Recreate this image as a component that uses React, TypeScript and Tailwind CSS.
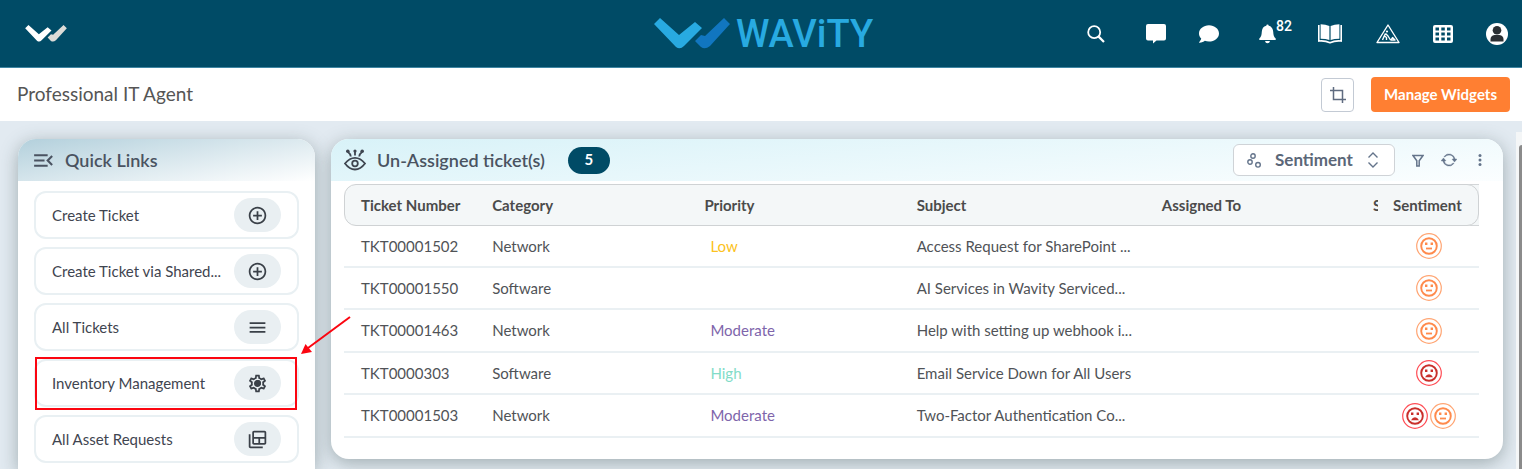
import { BsArrowRepeat } from 'react-icons/bs';
import { FaComment } from 'react-icons/fa';
import { MdAddCircleOutline, MdMenu, MdMenuOpen, MdOutlineBackupTable, MdOutlineSettings } from 'react-icons/md';

type Mood = 'neutral' | 'sad';

const quickLinks = [
  { label: 'Create Ticket', icon: <MdAddCircleOutline size={21} /> },
  { label: 'Create Ticket via Shared...', icon: <MdAddCircleOutline size={21} /> },
  { label: 'All Tickets', icon: <MdMenu size={21} /> },
  { label: 'Inventory Management', icon: <GearIcon />, highlighted: true },
  { label: 'All Asset Requests', icon: <MdOutlineBackupTable size={21} className="-scale-x-100" /> },
];

const tickets: { id: string; category: string; priority: string; subject: string; moods: Mood[] }[] = [
  { id: 'TKT00001502', category: 'Network', priority: 'Low', subject: 'Access Request for SharePoint ...', moods: ['neutral'] },
  { id: 'TKT00001550', category: 'Software', priority: '', subject: 'AI Services in Wavity Serviced...', moods: ['neutral'] },
  { id: 'TKT00001463', category: 'Network', priority: 'Moderate', subject: 'Help with setting up webhook i...', moods: ['neutral'] },
  { id: 'TKT0000303', category: 'Software', priority: 'High', subject: 'Email Service Down for All Users', moods: ['sad'] },
  { id: 'TKT00001503', category: 'Network', priority: 'Moderate', subject: 'Two-Factor Authentication Co...', moods: ['sad', 'neutral'] },
];

const priorityColors: Record<string, string> = {
  Low: 'text-[#fcc220]',
  Moderate: 'text-[#7e65ab]',
  High: 'text-[#82dcc8]',
};

function GearIcon() {
  return (
    <span className="relative">
      <MdOutlineSettings size={21} />
      <span className="absolute inset-0 m-auto size-[6px] rounded-full bg-current" />
    </span>
  );
}

function CheckMark({ className, left, right }: { className: string; left: string; right: string }) {
  return (
    <svg viewBox="0 0 76 31" className={className} aria-hidden="true">
      <path d="M0 6 6 0 25 17 41 4 48 10 30 28Q26 32 22 29Z" fill={left} />
      <path d="M41 23 47 17 51 18 70 0 76 6 56 28Q51 32 47 29Z" fill={right} />
    </svg>
  );
}

function SearchIcon() {
  return (
    <svg width="18" height="18" viewBox="0 0 18 18" fill="none" stroke="white" strokeWidth="1.8">
      <circle cx="7.2" cy="7.2" r="6" />
      <path d="m11.4 11.4 5.6 5.6" strokeWidth="2.2" />
    </svg>
  );
}

function MessageIcon() {
  return (
    <svg width="20" height="20" viewBox="0 0 20 20" fill="white">
      <path d="M2 0h16q2 0 2 2v12.5q0 2-2 2h-7.500L7 19.500v-3H2q-2 0-2-2V2Q0 0 2 0Z" />
    </svg>
  );
}

function BellIcon() {
  return (
    <svg width="17" height="20" viewBox="0 0 17 20" fill="white">
      <path d="M7.3 1.8a1.200 1.200 0 0 1 2.400 0c3 .6 4.300 3 4.500 6 .2 3.500.6 5.200 2.500 6.800V16H.3v-1.400c1.900-1.600 2.300-3.300 2.500-6.800.2-3 1.500-5.400 4.500-6ZM6 17h5q-.5 2.300-2.500 2.300T6 17Z" />
    </svg>
  );
}

function BookIcon() {
  return (
    <svg width="24" height="20" viewBox="0 0 24 20" fill="none" stroke="white">
      <path d="M.8 1v16q6.200-.6 11.200 1.700 5-2.300 11.200-1.700V1" strokeWidth="1.600" />
      <path d="M2.600.2q5 0 8.800 1.700v14.200q-3.500-1.400-8.800-1.400ZM21.400.2q-5 0-8.800 1.700v14.200q3.500-1.400 8.800-1.400Z" fill="white" stroke="none" />
    </svg>
  );
}

function ConstructionIcon() {
  return (
    <svg width="24" height="20" viewBox="0 0 24 20" fill="none" stroke="white" strokeLinejoin="round">
      <path d="M12 1 23 18.500H1Z" strokeWidth="1.400" />
      <circle cx="11" cy="7.500" r="1.100" fill="white" stroke="none" />
      <path d="m9.500 9.500-1.500 3L6.500 16M9.500 9.500l2.500 2.500 2.500 4M8.500 12l2 1.500V16M15 16l1.500-2.500 2.500 2.500Z" strokeWidth="1.400" />
    </svg>
  );
}

function GridIcon() {
  return (
    <svg width="20" height="18" viewBox="0 0 20 18" fill="white">
      <path fillRule="evenodd" d="M2 0h16q2 0 2 2v14q0 2-2 2H2q-2 0-2-2V2Q0 0 2 0ZM2.500 2.500v3H6v-3Zm5.800 0v3h3.500v-3Zm5.700 0v3h3.500v-3ZM2.500 7.500v3H6v-3Zm5.800 0v3h3.500v-3Zm5.700 0v3h3.500v-3ZM2.500 12.500v3H6v-3Zm5.800 0v3h3.500v-3Zm5.700 0v3h3.500v-3Z" />
    </svg>
  );
}

function UserIcon() {
  return (
    <svg width="22" height="22" viewBox="0 0 22 22">
      <circle cx="11" cy="11" r="11" fill="white" />
      <circle cx="11" cy="7.300" r="4.300" fill="#2b2f33" />
      <path d="M4.500 18.500v-2q0-4 4-4.500h5q4 .5 4 4.500v2Z" fill="#2b2f33" />
    </svg>
  );
}

function CropIcon() {
  return (
    <svg width="18" height="18" viewBox="0 0 18 18" fill="none" stroke="#5f6b80" strokeWidth="1.500">
      <path d="M4.500 1v12.500H17M1 4.500h12.500V17" />
    </svg>
  );
}

function EyeIcon() {
  return (
    <svg width="22" height="22" viewBox="0 0 22 22" fill="none" stroke="#3f4650" strokeWidth="1.800">
      <path d="M1 14.500Q5.500 8.800 11 8.800t10 5.700Q16.500 20.500 11 20.500T1 14.500Z" />
      <circle cx="11" cy="14.500" r="2.800" />
      <path d="M11 6.500V2M6.800 7.500Q6.500 5 4 3M15.200 7.500Q15.500 5 18 3" />
      <g fill="#3f4650" stroke="none">
        <circle cx="11" cy="2" r="1.600" />
        <circle cx="3.800" cy="2.200" r="1.800" />
        <circle cx="18.200" cy="2.200" r="1.800" />
      </g>
    </svg>
  );
}

function BubblesIcon() {
  return (
    <svg width="15" height="15" viewBox="0 0 15 15" fill="none" stroke="#64748b" strokeWidth="1.400">
      <circle cx="6" cy="3" r="2.200" />
      <circle cx="3" cy="9" r="2.200" />
      <circle cx="11" cy="11.800" r="2.300" />
    </svg>
  );
}

function SortIcon() {
  return (
    <svg width="12" height="16" viewBox="0 0 12 16" fill="none" stroke="#64748b" strokeWidth="1.400">
      <path d="M1.500 5.500 6 1l4.500 4.500M1.500 10.500 6 15l4.500-4.500" />
    </svg>
  );
}

function FilterIcon() {
  return (
    <svg width="12" height="13" viewBox="0 0 12 13" fill="none" stroke="#64748b" strokeWidth="1.500">
      <path d="M1 1.500h10L7.200 6.800V12H4.800V6.800Z" />
    </svg>
  );
}

function Face({ mood }: { mood: Mood }) {
  const sad = mood === 'sad';
  const color = sad ? '#c9302c' : '#ff8a4c';
  return (
    <svg width="26" height="26" viewBox="0 0 26 26" fill="none" role="img" aria-label={mood}>
      <circle cx="13" cy="13" r="12.300" stroke={sad ? '#ff4d55' : '#ffa573'} strokeWidth="1.200" />
      <circle cx="13" cy="13" r="7.800" stroke={color} strokeWidth="1.900" />
      <path d="M9 9.500h2.400V12H9ZM14.600 9.500H17V12h-2.400Z" fill={color} />
      {sad ? <path d="M9 17.300q1.500-3 4-3t4 3Z" fill={color} /> : <path d="M10 15.500h6" stroke={color} strokeWidth="1.800" />}
    </svg>
  );
}

function TopBar() {
  return (
    <header className="grid h-[68px] shrink-0 grid-cols-[1fr_auto_1fr] items-center border-b border-[#3f86a3] bg-[#004b66] pr-[14px] pl-[25px]">
      <a href="#home" aria-label="Home">
        <CheckMark className="h-[17px] w-[42px]" left="#ffffff" right="#dcdcd8" />
      </a>
      <a href="#wavity" className="flex items-center gap-[6px] pr-[6px]">
        <CheckMark className="h-[31px] w-[76px]" left="#28aae1" right="#1176c0" />
        <span className="font-[Roboto] text-[38px] leading-[42px] font-medium text-[#28aae1]">WAViTY</span>
      </a>
      <nav className="flex items-center justify-end">
        <button aria-label="Search" className="mr-[41px]"><SearchIcon /></button>
        <button aria-label="Messages" className="mr-[33px]"><MessageIcon /></button>
        <button aria-label="Chat" className="mr-[40px]"><FaComment size={20} color="white" /></button>
        <button aria-label="Notifications" className="mr-[26px] flex">
          <BellIcon />
          <span className="-mt-[5px] font-[Roboto] text-[14px] leading-none font-medium text-white">82</span>
        </button>
        <button aria-label="Knowledge base" className="mr-[34px]"><BookIcon /></button>
        <button aria-label="Incidents" className="mr-[33px]"><ConstructionIcon /></button>
        <button aria-label="Apps" className="mr-[33px]"><GridIcon /></button>
        <button aria-label="Account"><UserIcon /></button>
      </nav>
    </header>
  );
}

function QuickLinks() {
  return (
    <aside className="w-[297px] shrink-0 rounded-t-[18px] bg-white shadow-[0_4px_18px_rgba(60,80,80,0.4)]">
      <div className="flex h-[42px] items-center gap-[9px] rounded-t-[18px] bg-linear-[170deg] from-[#b3d0dc] to-white pl-[13px] text-[#4a5361]">
        <MdMenuOpen size={25} />
        <h2 className="text-[18px] font-semibold">Quick Links</h2>
      </div>
      <ul className="flex flex-col gap-2 px-4 pt-[10px] pb-4">
        {quickLinks.map(link => (
          <li key={link.label} className="relative">
            <button className="flex h-12 w-full items-center justify-between rounded-[12px] border-2 border-[#e9f0f3] px-4 text-left">
              <span className="text-[15px] text-[#3f4550]">{link.label}</span>
              <span className="flex h-[34px] w-[47px] items-center justify-center rounded-full bg-[#e9eff2] text-[#3a4048]">{link.icon}</span>
            </button>
            {link.highlighted && (
              <>
                <div className="pointer-events-none absolute -top-[2px] right-[2px] -bottom-[3px] left-[1px] border-2 border-[#fb0510]" />
                <svg width="52" height="42" viewBox="0 0 52 42" className="absolute -top-[44px] left-[266px] z-10">
                  <path d="M50 2 8 33" stroke="#fb0510" strokeWidth="2" />
                  <path d="m1 39 4.500-10 6.500 8Z" fill="#fb0510" />
                </svg>
              </>
            )}
          </li>
        ))}
      </ul>
    </aside>
  );
}

function TicketTable() {
  return (
    <div className="relative mr-6 ml-[13px]">
      <div className="absolute top-0 right-0 h-[42px] w-6 border-y border-[#d3d6d8] bg-[#f4f7f8]" />
      <div className="absolute inset-x-0 top-0 h-[42px] rounded-[12px] border border-[#cfd2d4] bg-[#f4f7f8]" />
      <table className="relative h-[254px] w-full table-fixed border-collapse text-left text-[15px] text-[#505357]">
        <colgroup>
          <col className="w-[12%]" />
          <col className="w-[18.700%]" />
          <col className="w-[18.700%]" />
          <col className="w-[21.600%]" />
          <col />
          <col className="w-[20px]" />
          <col className="w-[101px]" />
        </colgroup>
        <thead>
          <tr className="h-[42px] text-[#4b4b4b]">
            <th className="pl-[17px] font-bold">Ticket Number</th>
            <th className="pl-3 font-bold">Category</th>
            <th className="pl-3 font-bold">Priority</th>
            <th className="pl-3 font-bold">Subject</th>
            <th className="pl-3 font-bold">Assigned To</th>
            <th className="font-bold"><div className="ml-[15px] w-[5px] overflow-hidden">S</div></th>
            <th className="pl-[15px] font-bold">Sentiment</th>
          </tr>
        </thead>
        <tbody>
          {tickets.map(ticket => (
            <tr key={ticket.id} className="border-b-2 border-[#eaf0f3]">
              <td className="pl-[17px]">{ticket.id}</td>
              <td className="pl-3">{ticket.category}</td>
              <td className={`pl-[18px] ${priorityColors[ticket.priority] ?? ''}`}>{ticket.priority}</td>
              <td className="pl-3 whitespace-nowrap">{ticket.subject}</td>
              <td />
              <td />
              <td>
                <div className="flex justify-center gap-[2px]">
                  {ticket.moods.map(mood => <Face key={mood} mood={mood} />)}
                </div>
              </td>
            </tr>
          ))}
        </tbody>
      </table>
    </div>
  );
}

function TicketPanel() {
  return (
    <section className="min-w-0 flex-1 self-start rounded-[18px] bg-white pb-[21px] shadow-[0_4px_18px_rgba(60,80,80,0.4)]">
      <div className="mb-[3px] flex h-[42px] items-center rounded-t-[18px] bg-linear-[175deg] from-[#d8f2f8] to-[#fbfeff] pr-[21px] pl-[13px]">
        <EyeIcon />
        <h2 className="ml-[11px] text-[18px] font-semibold text-[#4a5361]">Un-Assigned ticket(s)</h2>
        <span className="ml-[23px] flex h-[27px] w-[42px] justify-center rounded-full bg-[#004b66] text-[15px] leading-[25px] font-bold text-white">5</span>
        <div className="ml-auto flex items-center">
          <button className="mr-[17px] flex h-8 w-[162px] items-center rounded-[6px] border border-[#cfd3d7] bg-white pl-[13px] text-[17px] font-bold text-[#5b6778]">
            <BubblesIcon />
            <span className="mr-[14px] ml-[13px]">Sentiment</span>
            <SortIcon />
          </button>
          <button aria-label="Filter" className="mr-[17px]"><FilterIcon /></button>
          <button aria-label="Refresh" className="mr-[21px]"><BsArrowRepeat size={16} color="#64748b" stroke="#64748b" strokeWidth={0.5} /></button>
          <button aria-label="More options">
            <svg width="4" height="12" viewBox="0 0 4 12" fill="#64748b">
              <circle cx="2" cy="1.500" r="1.500" />
              <circle cx="2" cy="6" r="1.500" />
              <circle cx="2" cy="10.500" r="1.500" />
            </svg>
          </button>
        </div>
      </div>
      <TicketTable />
    </section>
  );
}

export default function App() {
  return (
    <div className="flex h-screen flex-col overflow-hidden bg-[#e2eaf1] font-[Lato,sans-serif]">
      <TopBar />
      <div className="flex h-[53px] shrink-0 items-center justify-between bg-white pr-3 pl-[17px]">
        <h1 className="text-[19px] text-[#555]">Professional IT Agent</h1>
        <div className="flex items-center gap-[17px]">
          <button aria-label="Crop" className="flex h-[34px] w-[33px] items-center justify-center rounded-[4px] border border-[#c3cad4]"><CropIcon /></button>
          <button className="h-[35px] rounded-[4px] bg-[#ff7f32] px-[13px] text-[15px] font-bold text-white">Manage Widgets</button>
        </div>
      </div>
      <main className="flex min-h-0 flex-1">
        <div className="flex min-w-0 flex-1 gap-4 pt-[18px] pr-[13px] pl-[18px]">
          <QuickLinks />
          <TicketPanel />
        </div>
        <div className="mt-[11px] w-[6px] overflow-hidden bg-[#f4f6f7] pt-[13px] pl-[3px]">
          <div className="h-full rounded-tl-[4px] bg-[#8b8b8b]" />
        </div>
      </main>
    </div>
  );
}
